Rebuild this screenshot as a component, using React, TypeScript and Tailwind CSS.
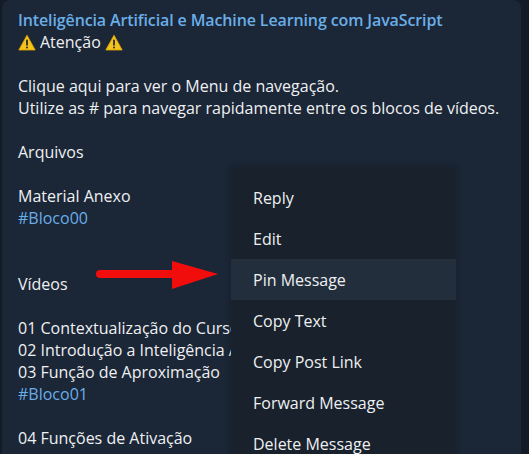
import React from 'react';

// Telegram-like channel post with a context menu open over it

const Warn = () => (
  <svg width="18" height="17" viewBox="0 0 18 17" className="inline-block">
    <path d="M9 1.2 L17.2 16 H0.8 Z" fill="#f6c31c" stroke="#e0a800" strokeWidth="0.8" strokeLinejoin="round" />
    <rect x="8.1" y="5.6" width="1.8" height="6.2" rx="0.8" fill="#2a2a2a" />
    <circle cx="9" cy="13.6" r="1" fill="#2a2a2a" />
  </svg>
);

const Link = ({ children }: { children: React.ReactNode }) => (
  <div className="text-[#6aaee8]">{children}</div>
);

// lines that run under the menu are clipped at its left edge
const Clipped = ({ children }: { children: React.ReactNode }) => (
  <div className="w-[213px] overflow-hidden whitespace-nowrap">{children}</div>
);

const menuItems = ['Reply', 'Edit', 'Pin Message', 'Copy Text', 'Copy Post Link', 'Forward Message', 'Delete Message'];

export default function App() {
  return (
    <div
      className="relative w-[529px] h-[454px] overflow-hidden bg-[#131b27] text-[16px] leading-[22px] text-[#eef0f2]"
      style={{ fontFamily: '"Open Sans", "Noto Sans", sans-serif' }}
    >
      {/* Message bubble */}
      <div className="ml-[2px] w-[519px] h-full rounded-tl-[8px] rounded-tr-[8px] bg-[#1b2636] pl-[16px] pt-[9px]">
        <div className="font-semibold tracking-[-0.12px] text-[#6aaee8]">Inteligência Artificial e Machine Learning com JavaScript</div>
        <div className="flex items-center gap-[4px]">
          <Warn /> Atenção <Warn />
        </div>
        <div className="h-[22px]" />
        <div>Clique aqui para ver o Menu de navegação.</div>
        <div>Utilize as # para navegar rapidamente entre os blocos de vídeos.</div>
        <div className="h-[22px]" />
        <div>Arquivos</div>
        <div className="h-[22px]" />
        <div>Material Anexo</div>
        <Link>#Bloco00</Link>
        <div className="h-[44px]" />
        <div>Vídeos</div>
        <div className="h-[22px]" />
        <Clipped>01 Contextualização do Curso</Clipped>
        <Clipped>02 Introdução a Inteligência Artificial</Clipped>
        <Clipped>03 Função de Aproximação</Clipped>
        <Link>#Bloco01</Link>
        <div className="h-[22px]" />
        <Clipped>04 Funções de Ativação</Clipped>
      </div>

      {/* Red arrow annotation */}
      <svg className="absolute left-[92px] top-[258px]" width="130" height="34" viewBox="0 0 130 34">
        <line x1="8" y1="16" x2="84" y2="16" stroke="#f20d0d" strokeWidth="8" strokeLinecap="round" />
        <path d="M80 3 L126 16 L80 31 Z" fill="#f20d0d" />
      </svg>

      {/* Context menu */}
      <div className="absolute left-[231px] top-[167px] w-[225px] bg-[#18212c] pt-[10px] pb-[10px] shadow-[0_0_6px_rgba(0,0,0,0.2)]">
        {menuItems.map(item => (
          <div
            key={item}
            className={`h-[41px] flex items-center pl-[22px] text-[#eef0f2] ${item === 'Pin Message' ? 'bg-[#232e3c]' : ''}`}
          >
            {item}
          </div>
        ))}
      </div>
    </div>
  );
}
